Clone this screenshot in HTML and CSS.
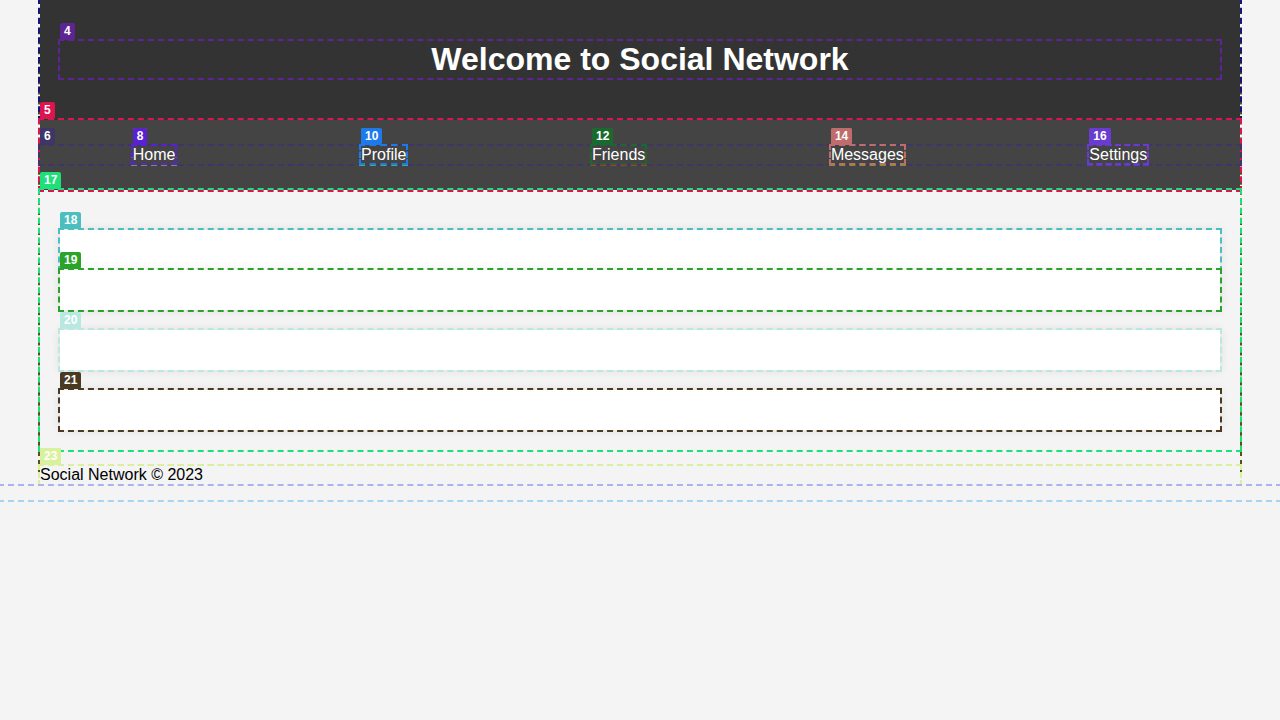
FILE: index.html
```html
<!DOCTYPE html>
<html lang="en" class="root">
<head>
<meta charset="utf-8">
<title>Social Network</title>
<link rel="stylesheet" href="styles.css">
</head>
<body class="page">
<div class="container dbg c-olive" data-n="2">
  <header class="site-header dbg c-navy" data-n="3">
    <h1 class="site-title dbg c-purple" data-n="4">Welcome to Social Network</h1>
  </header>
  <nav class="site-nav dbg c-crimson" data-n="5">
    <ul class="nav-list dbg c-slate" data-n="6">
      <li class="nav-item dbg c-li1" data-n="7"><a class="nav-link dbg c-violet" data-n="8" href="#">Home</a></li>
      <li class="nav-item dbg c-li2" data-n="9"><a class="nav-link dbg c-blue" data-n="10" href="#">Profile</a></li>
      <li class="nav-item dbg c-li3" data-n="11"><a class="nav-link dbg c-forest" data-n="12" href="#">Friends</a></li>
      <li class="nav-item dbg c-li4" data-n="13"><a class="nav-link dbg c-rose" data-n="14" href="#">Messages</a></li>
      <li class="nav-item dbg c-li5" data-n="15"><a class="nav-link dbg c-indigo" data-n="16" href="#">Settings</a></li>
    </ul>
  </nav>
  <main class="content dbg c-spring" data-n="17">
    <div class="post dbg c-teal" data-n="18"></div>
    <div class="post post-joined dbg c-green" data-n="19"></div>
    <div class="post dbg c-mint" data-n="20"></div>
    <div class="post dbg c-brown" data-n="21"></div>
  </main>
  <footer class="site-footer dbg c-peach" data-n="22">
    <p class="footer-text dbg c-lime" data-n="23">Social Network &copy; 2023</p>
  </footer>
</div>
</body>
</html>
```
FILE: styles.css
```css
html.root {
  outline: 2px dashed #a6d4f2;
}

body.page {
  position: relative;
  margin: 0 0 16px;
  background: #f4f4f4;
  font-family: "Liberation Sans", Arial, sans-serif;
  color: #000;
  outline: 2px dashed #aab2ef;
}

/* debug overlay: dashed outline + numbered badge */
.dbg {
  position: relative;
  outline: 2px dashed var(--c);
}

.dbg::before {
  content: attr(data-n);
  position: absolute;
  left: 0;
  bottom: calc(100% + 1px);
  height: 17px;
  padding: 0 4px;
  background: var(--c);
  color: #fff;
  font: bold 12px/17px "Liberation Sans", Arial, sans-serif;
  text-align: left;
  white-space: nowrap;
  border-radius: 2px;
}

.c-olive { --c: #575012; }
.c-navy { --c: #14147c; }
.c-purple { --c: #5c2593; }
.c-crimson { --c: #dc1450; }
.c-slate { --c: #3e3568; }
.c-violet { --c: #5a20d6; }
.c-blue { --c: #1c7aec; }
.c-forest { --c: #196a2e; }
.c-rose { --c: #c06c6c; }
.c-indigo { --c: #6a3bd0; }
.c-li1 { --c: #7a9a24; }
.c-li2 { --c: #3cb371; }
.c-li3 { --c: #c03030; }
.c-li4 { --c: #7a9a20; }
.c-li5 { --c: #5a3bc0; }
.c-spring { --c: #1ee07a; }
.c-teal { --c: #4bbfbf; }
.c-green { --c: #2aa32a; }
.c-mint { --c: #b8e8e0; }
.c-brown { --c: #4a3a22; }
.c-peach { --c: #e2c4b4; }
.c-lime { --c: #d9f09c; }

.container {
  max-width: 1200px;
  margin: 0 auto;
}

.site-header {
  background: #333;
  color: #fff;
  padding: 20px;
}

.site-title {
  margin: 0.67em 0;
  font-size: 32px;
  font-weight: bold;
  text-align: center;
}

.site-nav {
  background: #444;
  padding: 10px 0;
}

.nav-list {
  display: flex;
  justify-content: space-around;
  list-style: none;
  margin: 16px 0;
  padding: 0;
}

.nav-link {
  color: #fff;
  text-decoration: none;
  font-size: 16px;
}

.content {
  padding: 20px;
}

.post {
  background: #fff;
  padding: 20px;
  margin-top: 20px;
  box-shadow: 0 0 10px rgba(0, 0, 0, 0.1);
}

.post-joined {
  margin-top: 0;
}

.footer-text {
  margin: 16px 0 0;
  font-size: 16px;
}
```
